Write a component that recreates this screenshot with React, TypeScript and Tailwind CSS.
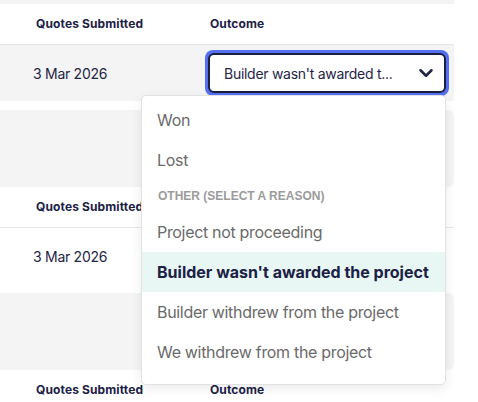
import React from 'react';
import { ChevronDown } from 'lucide-react';

const outcomes = [
  { label: 'Project not proceeding' },
  { label: "Builder wasn't awarded the project", active: true },
  { label: 'Builder withdrew from the project' },
  { label: 'We withdrew from the project' },
];

function HeaderRow() {
  return (
    <div className="flex h-[41px] items-center border-b border-[#e6e6e6] text-[12px] font-bold text-[#1b2145]">
      <div className="w-[210px] pl-[36px] tracking-[0.01em]">Quotes Submitted</div>
      <div className="tracking-[0.01em]">Outcome</div>
    </div>
  );
}

function Spacer() {
  return <div className="h-[77px] rounded-r-md bg-[#f4f4f4]" />;
}

export default function App() {
  return (
    <div className="relative h-[402px] w-[478px] overflow-hidden bg-white font-['Inter','Liberation_Sans',sans-serif]">
      <div className="w-[454px]">
        <div className="h-[4px] bg-[#f4f4f4]" />

        <HeaderRow />
        <div className="flex h-[56px] items-center bg-[#f4f4f4] text-[14px] tracking-[-0.02em] text-[#1f2545]">
          <div className="w-[205px] pl-[33px]">3 Mar 2026</div>
          <div className="rounded-[8px] bg-[#5470f2] p-[3px]">
            <button className="flex h-[40px] w-[238px] items-center justify-between rounded-[6px] border-2 border-[#1a1f3f] bg-white pl-[14px] pr-[7px] text-[14px] tracking-[-0.02em] text-[#1f2545]">
              <span>Builder wasn't awarded t...</span>
              <ChevronDown size={22} strokeWidth={2.8} />
            </button>
          </div>
        </div>
        <div className="h-[9px]" />
        <Spacer />

        <HeaderRow />
        <div className="flex h-[56px] items-center text-[14px] tracking-[-0.02em] text-[#1f2545]">
          <div className="w-[205px] pl-[33px]">3 Mar 2026</div>
        </div>
        <div className="h-[9px]" />
        <Spacer />

        <HeaderRow />
      </div>

      <div className="absolute left-[141px] top-[95px] w-[305px] rounded-[5px] border border-[#e2e2e2] bg-white pt-[4px] pb-[12px] shadow-[0_4px_12px_rgba(0,0,0,0.08)]">
        <div className="flex h-[40px] items-center px-[15px] text-[16px] tracking-[-0.02em] text-[#6a6a6a]">Won</div>
        <div className="flex h-[40px] items-center px-[15px] text-[16px] tracking-[-0.02em] text-[#6a6a6a]">Lost</div>
        <div className="flex h-[32px] items-center px-[16px] font-['Liberation_Sans',sans-serif] text-[12px] font-bold uppercase text-[#9b9b9b]">
          Other (select a reason)
        </div>
        {outcomes.map((o) =>
          o.active ? (
            <div key={o.label} className="flex h-[40px] items-center bg-[#e8f7f3] px-[15px] text-[16px] font-bold text-[#1b2145]">
              {o.label}
            </div>
          ) : (
            <div key={o.label} className="flex h-[40px] items-center px-[15px] text-[16px] tracking-[-0.02em] text-[#6a6a6a]">
              {o.label}
            </div>
          )
        )}
      </div>
    </div>
  );
}
